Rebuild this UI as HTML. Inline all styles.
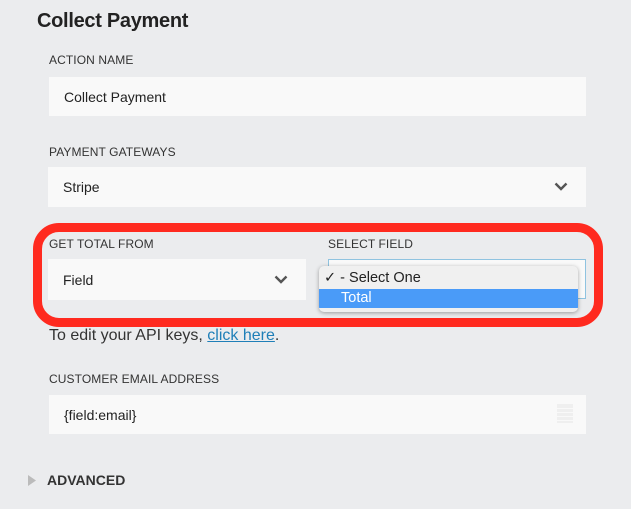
<!DOCTYPE html>
<html><head><meta charset="utf-8"><style>
body{margin:0;width:631px;height:509px;background:#ebecee;font-family:"Liberation Sans",sans-serif;position:relative;overflow:hidden;color:#222}
.a{position:absolute}
.t{left:37px;top:10px;font-size:20px;font-weight:bold;color:#222;letter-spacing:-0.3px}
.l{font-size:12px;color:#333;letter-spacing:0.1px}
.i{background:#f9f9f9;font-size:14px;color:#222;box-sizing:border-box;padding-left:15px;display:flex;align-items:center}
.chev{position:absolute;right:18px;top:50%;margin-top:-5px}
</style></head><body>
<div class="a t">Collect Payment</div>
<div class="a l" style="left:49px;top:53px">ACTION NAME</div>
<div class="a i" style="left:49px;top:77px;width:537px;height:39px">Collect Payment</div>
<div class="a l" style="left:49px;top:145px">PAYMENT GATEWAYS</div>
<div class="a i" style="left:48px;top:167px;width:538px;height:40px">Stripe<svg class="chev" width="14" height="9" viewBox="0 0 14 9"><path d="M1.5 1.5L7 7L12.5 1.5" fill="none" stroke="#555" stroke-width="2.4"/></svg></div>

<div class="a l" style="left:49px;top:237px">GET TOTAL FROM</div>
<div class="a i" style="left:48px;top:259px;width:258px;height:41px">Field<svg class="chev" width="14" height="9" viewBox="0 0 14 9"><path d="M1.5 1.5L7 7L12.5 1.5" fill="none" stroke="#555" stroke-width="2.4"/></svg></div>
<div class="a l" style="left:328px;top:237px">SELECT FIELD</div>
<div class="a" style="left:328px;top:259px;width:258px;height:40px;box-sizing:border-box;border:1px solid #8fc3e0;background:#f9f9f9"></div>
<div class="a" style="left:319px;top:266px;width:259px;height:46px;background:#f0f0f0;border-radius:5px;box-shadow:0 1px 4px rgba(0,0,0,.35);overflow:hidden;font-size:14.5px">
  <div style="height:23px;line-height:25px;padding-left:5px;color:#222">✓ - Select One</div>
  <div style="height:19px;line-height:19px;padding-left:22px;background:#4a9bf8;color:#fff">Total</div>
</div>
<div class="a" style="left:33px;top:223px;width:570px;height:104px;box-sizing:border-box;border:9px solid #ff2a1f;border-radius:26px"></div>

<div class="a" style="left:49px;top:327px;font-size:16px;color:#333">To edit your API keys, <span style="color:#1f7fb8;text-decoration:underline">click here</span>.</div>

<div class="a l" style="left:49px;top:372px">CUSTOMER EMAIL ADDRESS</div>
<div class="a i" style="left:49px;top:395px;width:537px;height:39px">{field:email}
<svg class="a" style="right:13px;top:9px" width="16" height="19" viewBox="0 0 16 19"><rect x="0" y="0" width="16" height="19" fill="#efefef"/><g stroke="#f9f9f9" stroke-width="1"><path d="M0 4.5H16M0 8.5H16M0 12.5H16M0 16.5H16"/></g></svg></div>

<svg class="a" style="left:28px;top:475px" width="8" height="11" viewBox="0 0 8 11"><path d="M0 0L8 5.5L0 11Z" fill="#bbb"/></svg>
<div class="a" style="left:47px;top:472px;font-size:14px;font-weight:bold;color:#333">ADVANCED</div>
</body></html>
